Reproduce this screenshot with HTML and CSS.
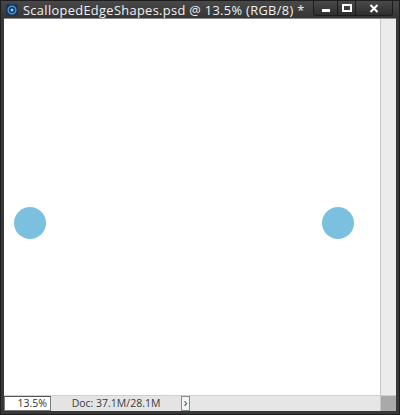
FILE: index.html
```html
<!DOCTYPE html>
<html>
<head><meta charset="utf-8"><link rel="stylesheet" href="styles.css"></head>
<body>
<div class="win">
  <div class="titlebar">
    <svg class="logo" width="12" height="12" viewBox="0 0 12 12">
      <rect x="0" y="0" width="12" height="12" rx="2" fill="#1b3556"/>
      <circle cx="6" cy="6" r="3.8" fill="none" stroke="#3f95d6" stroke-width="1.5"/>
      <circle cx="6" cy="6" r="1.5" fill="#8fd0ff"/>
    </svg>
    <span class="title">ScallopedEdgeShapes.psd @ 13.5% (RGB/8) *</span>
    <div class="btns">
      <div class="btn bmin"><span class="minbar"></span></div>
      <div class="btn bmax"><span class="maxbox"></span></div>
      <div class="btn bclose">
        <svg width="10" height="9" viewBox="0 0 10 9"><path d="M1.5 1 L8.5 8 M8.5 1 L1.5 8" stroke="#fff" stroke-width="2"/></svg>
      </div>
    </div>
  </div>
  <div class="body">
    <div class="canvas">
      <div class="dot dot-l"></div>
      <div class="dot dot-r"></div>
    </div>
    <div class="vscroll"></div>
  </div>
  <div class="status">
    <div class="zoom">13.5%</div>
    <div class="doc">Doc: 37.1M/28.1M</div>
    <div class="arrow">&#x203A;</div>
    <div class="hfill"></div>
    <div class="corner"></div>
  </div>
</div>
</body>
</html>
```
FILE: styles.css
```css
html, body { margin: 0; padding: 0; }
body { width: 400px; height: 415px; overflow: hidden; background: #2f2f2f; font-family: "Open Sans", "DejaVu Sans", sans-serif; }
.win { width: 400px; height: 415px; box-sizing: border-box; background: #383838; border: 1px solid #1e1e1e; padding: 0 3px 3px 3px; display: flex; flex-direction: column; }
.titlebar { height: 17px; display: flex; align-items: center; position: relative; background: linear-gradient(#484848, #353535); margin: 0 -3px; padding: 0 4px 0 5px; }
.logo { flex: none; margin-right: 5px; margin-top: 1px; }
.title { color: #f2f2f2; font-size: 12.8px; letter-spacing: 0.35px; white-space: nowrap; margin-top: 1px; }
.btns { position: absolute; right: 6px; top: 0; display: flex; height: 16px; }
.btn { height: 15px; box-sizing: border-box; border: 1px solid #1c1c1c; border-top: none; background: linear-gradient(#4a4a4a, #2e2e2e); display: flex; align-items: center; justify-content: center; }
.bmin { width: 25px; border-radius: 0 0 0 3px; }
.bmax { width: 18px; border-left: none; }
.bclose { width: 37px; border-left: none; border-radius: 0 0 3px 0; }
.minbar { width: 8px; height: 3px; background: #fff; margin-top: 5px; }
.maxbox { width: 6px; height: 4px; border: 2px solid #fff; }
.body { flex: 1; display: flex; background: #fff; border-top: 1px solid #8a8a8a; }
.canvas { flex: 1; position: relative; background: #fff; }
.dot { position: absolute; width: 32px; height: 32px; border-radius: 50%; background: #7cc0df; top: 188px; }
.dot-l { left: 10px; }
.dot-r { left: 318px; }
.vscroll { width: 15px; background: #ececec; border-left: 1px solid #c8c8c8; }
.status { height: 15px; display: flex; background: #e4e4e4; border-top: 1px solid #cfcfcf; font-size: 10.5px; color: #333; }
.zoom { width: 42px; background: #fff; border: 1px solid #7a7a7a; border-top-color: #555; text-align: right; padding-right: 3px; line-height: 13px; }
.doc { width: 130px; text-align: center; line-height: 15px; color: #3a3a3a; }
.arrow { width: 9px; box-sizing: border-box; border: 1px solid #8a8a8a; background: #f4f4f4; text-align: center; line-height: 12px; font-size: 12px; color: #333; }
.hfill { flex: 1; background: #e6e6e6; }
.corner { width: 15px; background: #a9a9a9; border-left: 1px solid #c8c8c8; }
```
